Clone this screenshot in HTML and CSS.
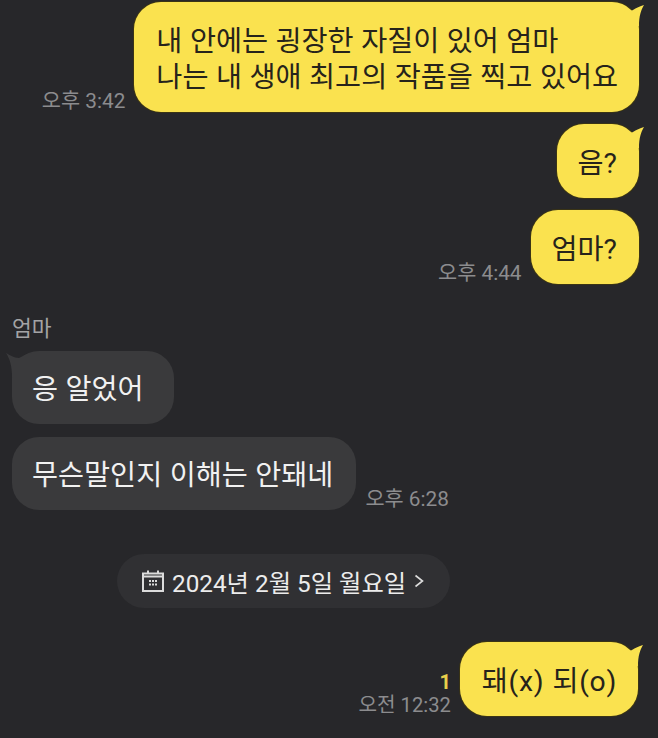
FILE: index.html
```html
<!DOCTYPE html>
<html lang="ko">
<head>
<meta charset="utf-8">
<title>채팅</title>
<link rel="stylesheet" href="styles.css">
</head>
<body>
<main class="chat">
  <div class="row row-me row-first">
    <span class="meta"><time class="time">오후 3:42</time></span>
    <p class="bubble bubble-me tail-me">내 안에는 굉장한 자질이 있어 엄마<br>나는 내 생애 최고의 작품을 찍고 있어요</p>
  </div>
  <div class="row row-me row-gap">
    <p class="bubble bubble-me bubble-short tail-me">음?</p>
  </div>
  <div class="row row-me row-gap">
    <span class="meta"><time class="time">오후 4:44</time></span>
    <p class="bubble bubble-me bubble-short">엄마?</p>
  </div>
  <div class="name">엄마</div>
  <div class="row row-other">
    <p class="bubble bubble-other bubble-wide tail-other">응 알었어</p>
  </div>
  <div class="row row-other row-gap-other">
    <p class="bubble bubble-other">무슨말인지 이해는 안돼네</p>
    <span class="meta"><time class="time">오후 6:28</time></span>
  </div>
  <div class="date-row">
    <div class="date-pill">
      <svg class="cal" viewBox="0 0 22 22" aria-hidden="true">
        <path class="cal-line" d="M1 3.5h20v17.5H1z"/>
        <path class="cal-line" d="M1 6.5h20M6 .5v3M16 .5v3"/>
        <path class="cal-dots" d="M7 10h2v2H7zM10 10h2v2h-2zM13 10h2v2h-2zM7 13.500h2v2H7zM10 13.500h2v2h-2zM13 13.500h2v2h-2z"/>
      </svg>
      <span>2024년 2월 5일 월요일</span>
      <svg class="chev" viewBox="0 0 10 14" aria-hidden="true"><path d="M1.500 1.500 8.500 7l-7 5.500"/></svg>
    </div>
  </div>
  <div class="row row-me row-last">
    <span class="meta meta-stack"><b class="unread">1</b><time class="time time-narrow">오전 12:32</time></span>
    <p class="bubble bubble-me bubble-last tail-me">돼(x) 되(o)</p>
  </div>
</main>
</body>
</html>
```
FILE: styles.css
```css
* { box-sizing: border-box; }
html, body { height: 100%; }
body {
  margin: 0;
  background: #27272a;
  overflow: hidden;
  font-family: "Roboto", "Noto Sans CJK KR", sans-serif;
}
.chat {
  display: flex;
  flex-direction: column;
  padding: 2px 19px 0 12px;
}
.row { display: flex; align-items: flex-end; gap: 9px; }
.row-me { justify-content: flex-end; }
.row-gap { margin-top: 12px; }
.row-gap-other { margin-top: 13px; }
.row-last { margin-top: 34px; margin-right: 1px; }
.bubble {
  position: relative;
  margin: 0;
  font-size: 28.3px;
  line-height: 36px;
  word-spacing: .5px;
  padding: 22px 21px 16px 22px;
  border-radius: 27px;
  white-space: nowrap;
}
.bubble-me { background: #fae24f; color: #26231b; box-shadow: 0 0 0 1px #3a3415; }
.bubble-short { padding-left: 21px; padding-right: 22px; }
.bubble-last { padding-left: 22px; padding-right: 21px; letter-spacing: .7px; }
.bubble-other { background: #3a3a3c; color: #f1f1f1; padding: 21px 23px 16px 20px; }
.bubble-wide { padding-right: 30px; }
.tail-me::after, .tail-other::after {
  content: "";
  position: absolute;
  top: 0;
  width: 26px;
  height: 24px;
  background: inherit;
}
.tail-me::after {
  right: -7px;
  clip-path: path("M6 6 C9 9 11 9 13 8 C16 6 20 4 24 3 C21 8 19 14 19 24 L0 24 Z");
}
.tail-other::after {
  left: -6px;
  top: 2px;
  clip-path: path("M0 0 C4 2 8 5 13 5 C17 3 22 0 26 0 L26 24 L6 24 C6 14 4 6 0 0 Z");
}
.meta { display: flex; flex-direction: column; align-items: flex-end; }
.time { color: #8c8c8e; font-size: 20.8px; line-height: 22px; }
.time-narrow { font-size: 20.2px; }
.unread { color: #e8d04c; font-weight: 700; font-size: 20px; line-height: 24px; }
.name {
  color: #a3a3a5;
  font-size: 21.5px;
  line-height: 24px;
  margin-top: 33px;
  margin-bottom: 10px;
}
.date-row { display: flex; justify-content: flex-start; margin-top: 44px; padding-left: 105px; }
.date-pill {
  display: flex;
  align-items: center;
  height: 54px;
  padding: 0 26px 0 25px;
  border-radius: 27px;
  background: #303033;
  color: #ececec;
  font-size: 24.3px;
  gap: 8px;
}
.cal { width: 22px; height: 22px; flex: none; }
.cal-line { fill: none; stroke: #dcdcdc; stroke-width: 2; }
.cal-dots { fill: #dcdcdc; }
.chev { width: 10px; height: 14px; flex: none; }
.chev path { fill: none; stroke: #dcdcdc; stroke-width: 1.6; }
```
